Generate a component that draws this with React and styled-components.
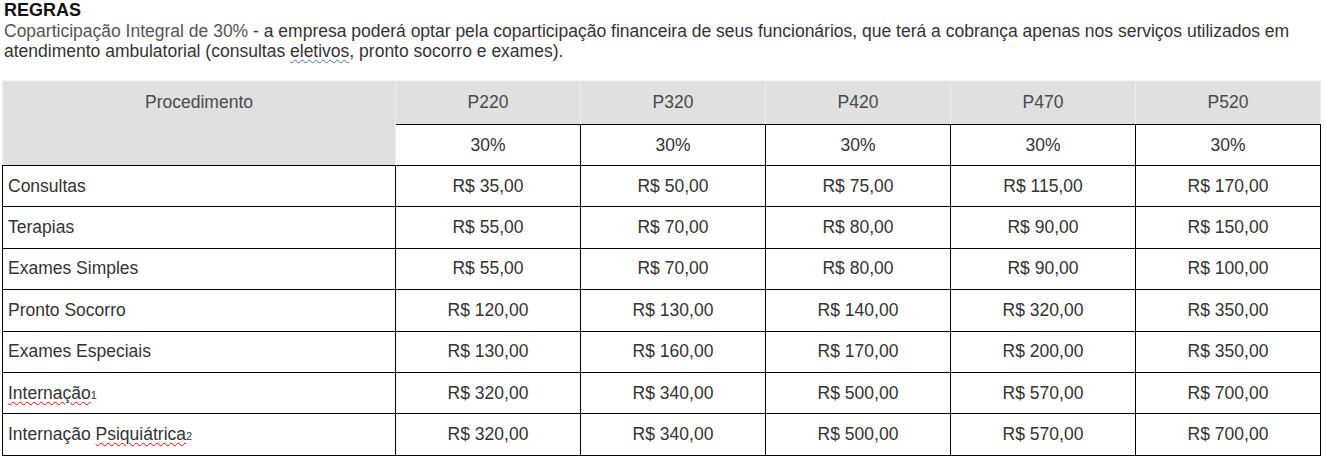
import React from "react";
import styled, { createGlobalStyle } from "styled-components";

const plans = ["P220", "P320", "P420", "P470", "P520"];

// prefix = plain text, marked = word with spell-check underline, sub = footnote number
const rows = [
  { prefix: "Consultas", values: ["R$ 35,00", "R$ 50,00", "R$ 75,00", "R$ 115,00", "R$ 170,00"] },
  { prefix: "Terapias", values: ["R$ 55,00", "R$ 70,00", "R$ 80,00", "R$ 90,00", "R$ 150,00"] },
  { prefix: "Exames Simples", values: ["R$ 55,00", "R$ 70,00", "R$ 80,00", "R$ 90,00", "R$ 100,00"] },
  { prefix: "Pronto Socorro", values: ["R$ 120,00", "R$ 130,00", "R$ 140,00", "R$ 320,00", "R$ 350,00"] },
  { prefix: "Exames Especiais", values: ["R$ 130,00", "R$ 160,00", "R$ 170,00", "R$ 200,00", "R$ 350,00"] },
  {
    prefix: "",
    marked: "Internação",
    sub: "1",
    values: ["R$ 320,00", "R$ 340,00", "R$ 500,00", "R$ 570,00", "R$ 700,00"],
  },
  {
    prefix: "Internação ",
    marked: "Psiquiátrica",
    sub: "2",
    values: ["R$ 320,00", "R$ 340,00", "R$ 500,00", "R$ 570,00", "R$ 700,00"],
  },
];

const App = () => {
  return (
    <>
      <GlobalStyle />
      <StyledPage>
        <StyledTitle>REGRAS</StyledTitle>
        <StyledIntro>
          <Light>Coparticipação Integral de 30%</Light> - a empresa poderá optar pela
          coparticipação financeira de seus funcionários, que terá a cobrança apenas nos
          serviços utilizados em atendimento ambulatorial (consultas{" "}
          <Squiggle $color="#3b6fd4">eletivos</Squiggle>, pronto socorro e exames).
        </StyledIntro>
        <StyledTable>
          <colgroup>
            <col style={{ width: 393 }} />
            {plans.map((p) => (
              <col key={p} style={{ width: 185 }} />
            ))}
          </colgroup>
          <thead>
            <tr>
              <HeadCell rowSpan={2} $first>
                Procedimento
              </HeadCell>
              {plans.map((p) => (
                <HeadCell key={p}>{p}</HeadCell>
              ))}
            </tr>
            <tr>
              {plans.map((p) => (
                <Cell key={p} $center>
                  30%
                </Cell>
              ))}
            </tr>
          </thead>
          <tbody>
            {rows.map((r, i) => (
              <tr key={i}>
                <Cell $body>
                  {r.prefix}
                  {r.marked && <Squiggle $color="red">{r.marked}</Squiggle>}
                  {r.sub && <Sub>{r.sub}</Sub>}
                </Cell>
                {r.values.map((v, j) => (
                  <Cell key={j} $center $body>
                    {v}
                  </Cell>
                ))}
              </tr>
            ))}
          </tbody>
        </StyledTable>
      </StyledPage>
    </>
  );
};

const GlobalStyle = createGlobalStyle`
  body {
    margin: 0;
    background: #fff;
    font-family: "Liberation Sans", Arial, sans-serif;
  }
`;

const StyledPage = styled.div`
  padding: 0 0 0 2px;
`;

const StyledTitle = styled.div`
  font-family: "Liberation Sans", Arial, sans-serif;
  font-weight: 700;
  font-size: 18px;
  line-height: 20px;
  color: #111;
  padding-left: 2px;
`;

const StyledIntro = styled.p`
  margin: 1px 0 0;
  padding: 0 0 0 2px;
  font-size: 17.5px;
  line-height: 20px;
  color: #333;
`;

const Light = styled.span`
  color: #555;
`;

const Squiggle = styled.span`
  text-decoration: underline wavy ${(p) => p.$color};
  text-decoration-thickness: 1px;
  text-underline-offset: 2px;
`;

const Sub = styled.span`
  font-size: 11px;
`;

const StyledTable = styled.table`
  margin-top: 19px;
  border-collapse: collapse;
  table-layout: fixed;
  width: 1319px;
  font-size: 17.5px;
  color: #333;
`;

const HeadCell = styled.th`
  background: #e0e0e0;
  font-weight: 400;
  color: #4a4a4a;
  height: 43px;
  padding: 0;
  text-align: center;
  vertical-align: ${(p) => (p.$first ? "top" : "middle")};
  line-height: ${(p) => (p.$first ? "43px" : "normal")};
  border: 1px solid #ededed;
  border-bottom-color: #000;
  border-top-color: #f4f4f4;
`;

const Cell = styled.td`
  height: ${(p) => (p.$body ? "40.4px" : "40px")};
  padding: 0 ${(p) => (p.$center ? "0" : "5px")};
  text-align: ${(p) => (p.$center ? "center" : "left")};
  border: 1px solid #000;
  white-space: nowrap;
`;

export default App;
